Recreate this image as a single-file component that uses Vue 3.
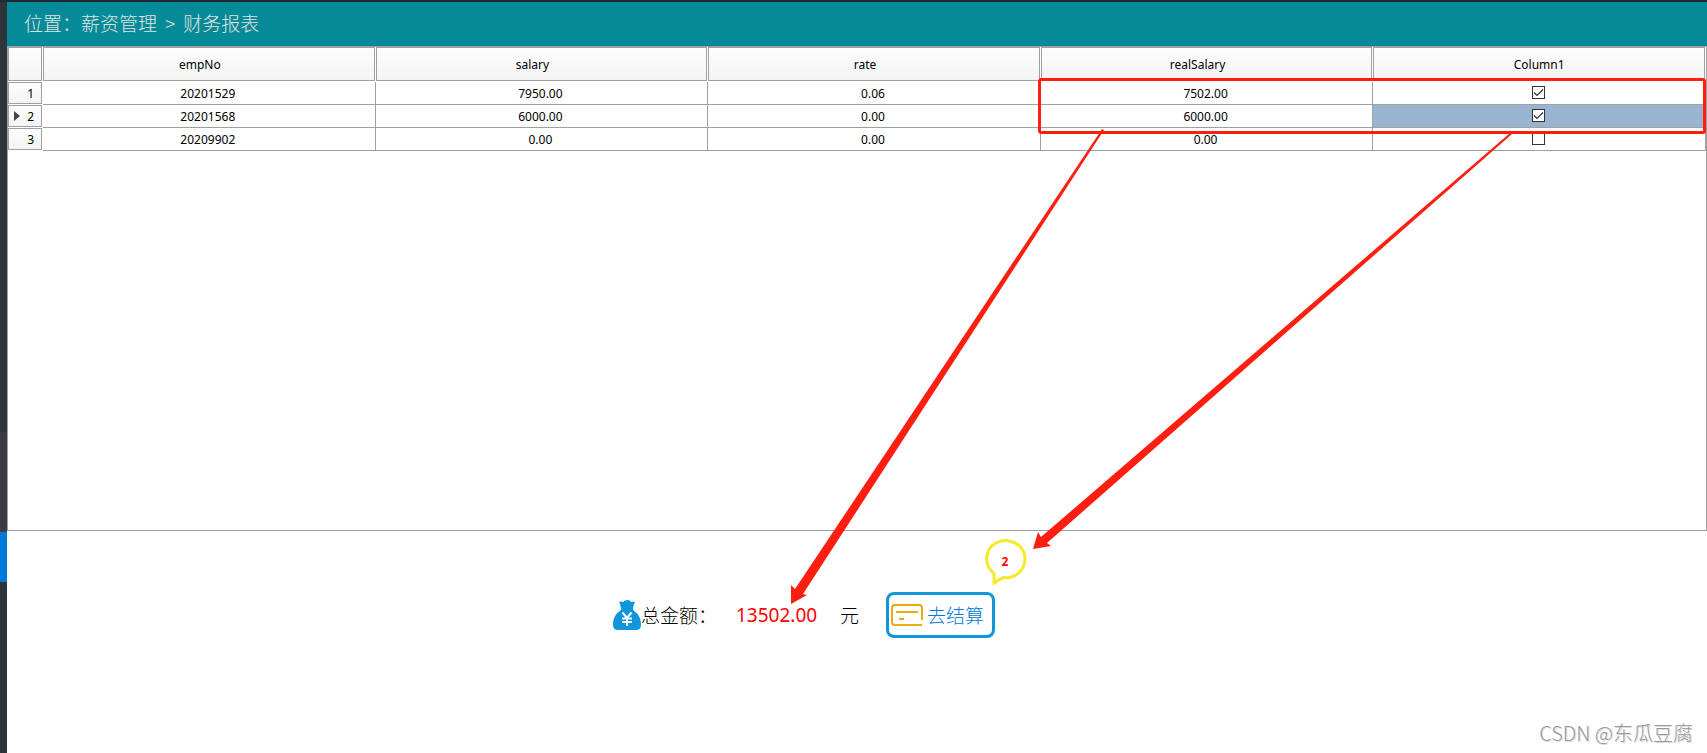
<script setup>
import { ref, computed } from 'vue'

const columns = ['empNo', 'salary', 'rate', 'realSalary']
const rows = ref([
  { empNo: '20201529', salary: '7950.00', rate: '0.06', realSalary: '7502.00', checked: true },
  { empNo: '20201568', salary: '6000.00', rate: '0.00', realSalary: '6000.00', checked: true },
  { empNo: '20209902', salary: '0.00', rate: '0.00', realSalary: '0.00', checked: false },
])
const current = ref(1)
const picked = computed(() => rows.value.filter((r) => r.checked))
const total = computed(() => picked.value.reduce((sum, r) => sum + Number(r.realSalary), 0).toFixed(2))
</script>

<template>
  <div class="window">
    <aside class="rail">
      <span class="rail-group"></span>
      <span class="rail-active"></span>
    </aside>
    <main class="main">
      <header class="crumbs">
        <span>位置：薪资管理</span><span class="sep">&gt;</span><span>财务报表</span>
      </header>

      <section class="grid">
        <table>
          <colgroup>
            <col class="col-index" />
            <col v-for="n in 5" :key="n" />
          </colgroup>
          <thead>
            <tr>
              <th><div class="raised"></div></th>
              <th v-for="c in columns" :key="c" scope="col"><div class="raised sortable">{{ c }}</div></th>
              <th scope="col"><div class="raised">Column1</div></th>
            </tr>
          </thead>
          <tbody>
            <tr v-for="(row, i) in rows" :key="row.empNo" @click="current = i">
              <th scope="row">
                <div class="raised index">
                  <svg v-if="i === current" class="marker" viewBox="0 0 6 10"><path d="M0 0 L6 5 L0 10 Z" /></svg>
                  <span>{{ i + 1 }}</span>
                </div>
              </th>
              <td v-for="c in columns" :key="c">{{ row[c] }}</td>
              <td class="tick" :class="{ selected: i === current }">
                <input v-model="row.checked" type="checkbox" :aria-label="'Column1 ' + row.empNo" />
              </td>
            </tr>
          </tbody>
        </table>
      </section>

      <footer class="summary">
        <svg class="bag" viewBox="0 0 28 30">
          <path class="bag-body" d="M7 4 C5 1 8 1 10 2 C12 0 16 -1 18 2 C21 1 23 1 21 4 L20 8 Q20 10 21 11 C26 14 28 19 28 25 Q28 30 23 30 H5 Q0 30 0 25 C0 19 2 14 7 11 Q9 10 8 8 Z" />
          <path class="yen" d="M9.5 12.5 L14 18 L18.500 12.500 M14 18 V26 M9 18.500 H19 M9 22 H19" />
        </svg>
        <span class="label">总金额：</span>
        <output class="total">{{ total }}</output>
        <span class="unit">元</span>
        <div class="checkout">
          <button type="button">
            <svg class="card" viewBox="0 0 32 22">
              <path d="M31 16 V4 Q31 1 28 1 H4 Q1 1 1 4 V18 Q1 21 4 21 H31 M5 8 H27 M8 15 H13" />
            </svg>
            <span>去结算</span>
          </button>
          <div class="badge">
            <svg viewBox="0 0 42 46">
              <path d="M9 34.5 C-2 25 0 10 11 4 C22 -2 37 4 39.5 16 C42 30 31 40 19 38.5 Q14 40 9 44 Z" />
            </svg>
            <span>{{ picked.length }}</span>
          </div>
        </div>
      </footer>
    </main>

    <svg class="notes" viewBox="0 0 1707 753" preserveAspectRatio="none">
      <rect x="1039.5" y="79.5" width="665" height="53" rx="2" />
      <path d="M1102 129 L1104 130 L803 594 L807 595 L791 604 L791 585 L795 589 Z" />
      <path d="M1510 133 L1512 134 L1047 543 L1051 546 L1033 549 L1038 532 L1041 537 Z" />
    </svg>
    <div class="watermark">CSDN @东瓜豆腐</div>
  </div>
</template>

<style>
body {
  margin: 0;
}
</style>

<style scoped>
.window {
  position: relative;
  box-sizing: border-box;
  display: flex;
  min-height: 100vh;
  border-top: 2px solid #1f2a33;
  background: #fff;
  color: #000;
  font-family: "Noto Sans", "Noto Sans CJK SC", sans-serif;
  font-size: 12px;
}
.rail {
  display: flex;
  flex-direction: column;
  flex: none;
  width: 7px;
  padding-top: 430px;
  box-sizing: border-box;
  background: #2b353b;
}
.rail-group {
  height: 100px;
  background: #3b3c45;
}
.rail-active {
  height: 50px;
  background: #0078d7;
}
.main {
  display: flex;
  flex: 1;
  flex-direction: column;
  min-width: 0;
}
.crumbs {
  display: flex;
  align-items: center;
  box-sizing: border-box;
  height: 44px;
  padding: 0 0 2px 17px;
  background: #058a98;
  color: #e2e2e2;
  font-family: "Noto Sans CJK SC", sans-serif;
  font-size: 19px;
  line-height: 28px;
  font-weight: 300;
}
.sep {
  margin: 0 8px;
}
.grid {
  flex: 1;
  border: 1px solid #a0a0a4;
}
table {
  width: 100%;
  table-layout: fixed;
  border-collapse: separate;
  border-spacing: 0;
}
.col-index {
  width: 35px;
}
th {
  padding: 0 1px 1px 0;
  font-weight: 400;
}
.raised {
  display: flex;
  align-items: center;
  justify-content: center;
  box-sizing: border-box;
  height: 34px;
  border: 1px solid #a0a0a0;
  background: linear-gradient(#fdfdfd, #f4f4f4);
}
.sortable {
  padding-right: 18px;
}
.index {
  justify-content: flex-end;
  gap: 7px;
  height: 22px;
  padding-right: 7px;
}
.marker {
  width: 6px;
  height: 10px;
  fill: #444;
}
td {
  box-sizing: border-box;
  height: 23px;
  padding: 2px 2px 0 0;
  border-right: 1px solid #a0a0a0;
  border-bottom: 1px solid #a0a0a0;
  line-height: 20px;
  text-align: center;
}
.tick {
  padding: 0 2px 1px 0;
}
.selected {
  background: #99b4d1;
}
input {
  appearance: none;
  display: block;
  box-sizing: border-box;
  width: 13px;
  height: 13px;
  margin: 0 auto;
  border: 1px solid #333;
  background: #fff;
}
input:checked {
  background: #fff url("data:image/svg+xml,%3Csvg xmlns='http://www.w3.org/2000/svg' viewBox='0 0 11 11'%3E%3Cpath d='M1 5.5L4 8.5L10 2.5' fill='none' stroke='%23333' stroke-width='1.2'/%3E%3C/svg%3E");
}
.summary {
  display: flex;
  align-items: center;
  justify-content: center;
  box-sizing: border-box;
  height: 222px;
  padding: 0 106px 54px 0;
  font-size: 19px;
  line-height: 28px;
}
.bag {
  width: 28px;
  height: 30px;
}
.bag-body {
  fill: #1296db;
}
.yen {
  fill: none;
  stroke: #fff;
  stroke-width: 2;
}
.label {
  width: 95px;
  font-weight: 300;
}
.total {
  width: 104px;
  color: #f00;
}
.unit {
  width: 46px;
  font-weight: 300;
}
.label,
.unit,
button {
  font-family: "Noto Sans CJK SC", sans-serif;
}
.checkout {
  position: relative;
}
button {
  display: flex;
  align-items: center;
  gap: 4px;
  box-sizing: border-box;
  height: 46px;
  padding: 0 8px 0 2px;
  border: 3px solid #1296db;
  border-radius: 8px;
  background: #fff;
  color: #0078d7;
  font-size: 19px;
  font-weight: 300;
  line-height: 28px;
}
.card {
  width: 32px;
  height: 22px;
  fill: none;
  stroke: #e8ad0c;
  stroke-width: 2;
}
.badge {
  position: absolute;
  left: 99px;
  bottom: 53px;
  display: grid;
  place-items: center;
  width: 42px;
  height: 46px;
  color: #f00;
  font-size: 12px;
  font-weight: 700;
  line-height: 16px;
}
.badge svg,
.badge span {
  grid-area: 1 / 1;
}
.badge svg {
  width: 42px;
  height: 46px;
  fill: none;
  stroke: #f4ea2a;
  stroke-width: 3;
}
.badge span {
  padding-right: 2px;
}
.notes {
  position: absolute;
  top: -2px;
  left: 0;
  width: 100%;
  height: calc(100% + 2px);
  pointer-events: none;
  fill: #ff1e10;
}
.notes rect {
  fill: none;
  stroke: #ff1e10;
  stroke-width: 3;
}
.watermark {
  position: absolute;
  right: 14px;
  bottom: 6px;
  color: #999;
  font-family: "Noto Sans CJK SC", sans-serif;
  font-size: 20px;
  font-weight: 300;
  line-height: 28px;
  text-shadow: 1px 1px 0 #ddd;
}
</style>
